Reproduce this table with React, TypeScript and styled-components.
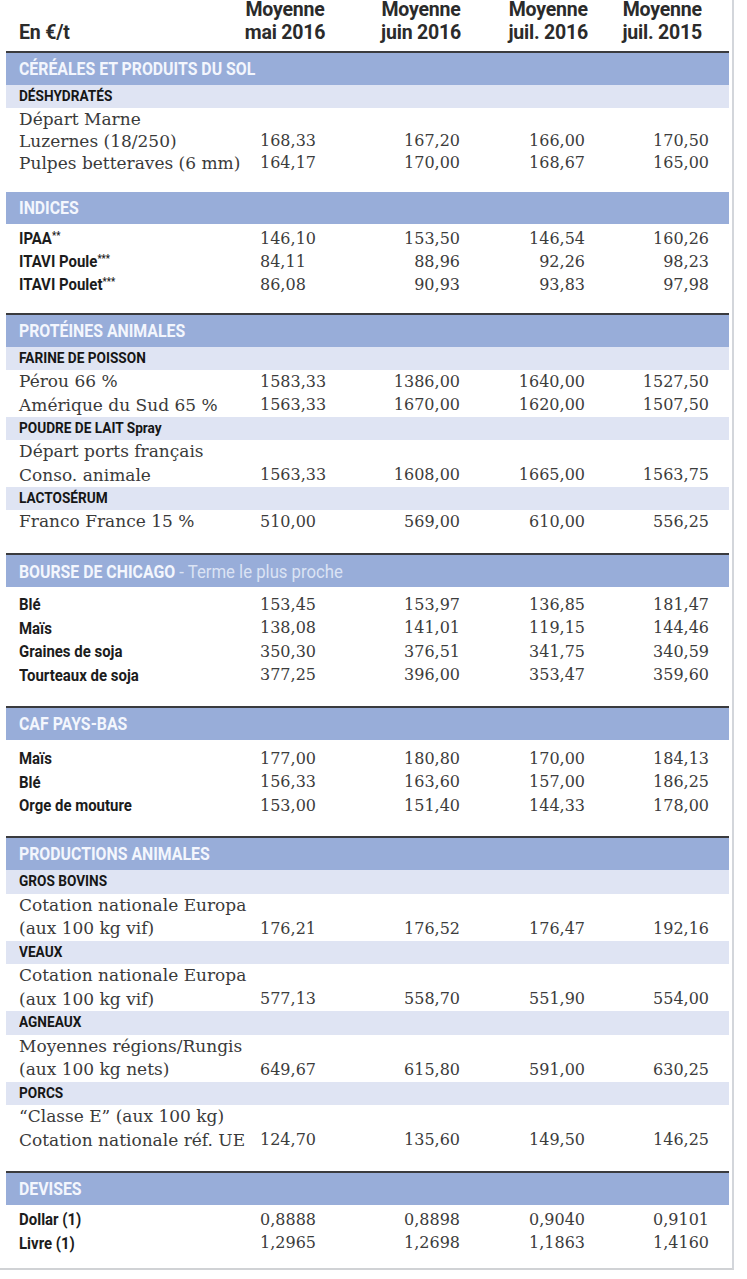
import React from 'react';
import styled, { createGlobalStyle } from 'styled-components';

const GlobalStyle = createGlobalStyle`
  html, body { margin: 0; padding: 0; background: #ffffff; }
  body { font-family: "DejaVu Serif", serif; overflow: hidden; }
`;

const COLS = '234px 90px 140px 125px 134px';

type Item =
  | { kind: 'sub'; text: string; extra?: string }
  | { kind: 'row'; label: string; bold?: boolean; sup?: string; values?: string[] };

type SectionData = {
  title: string;
  suffix?: string;
  rule: boolean;
  row: number;
  sub: number;
  pt: number;
  pb: number;
  items: Item[];
};

const sections: SectionData[] = [
  {
    title: 'CÉRÉALES ET PRODUITS DU SOL',
    rule: true, row: 22, sub: 23, pt: 0, pb: 18,
    items: [
      { kind: 'sub', text: 'DÉSHYDRATÉS' },
      { kind: 'row', label: 'Départ Marne' },
      { kind: 'row', label: 'Luzernes (18/250)', values: ['168,33', '167,20', '166,00', '170,50'] },
      { kind: 'row', label: 'Pulpes betteraves (6 mm)', values: ['164,17', '170,00', '168,67', '165,00'] },
    ],
  },
  {
    title: 'INDICES',
    rule: false, row: 23, sub: 23, pt: 3, pb: 17,
    items: [
      { kind: 'row', label: 'IPAA', sup: '**', bold: true, values: ['146,10', '153,50', '146,54', '160,26'] },
      { kind: 'row', label: 'ITAVI Poule', sup: '***', bold: true, values: ['84,11', '88,96', '92,26', '98,23'] },
      { kind: 'row', label: 'ITAVI Poulet', sup: '***', bold: true, values: ['86,08', '90,93', '93,83', '97,98'] },
    ],
  },
  {
    title: 'PROTÉINES ANIMALES',
    rule: true, row: 23.5, sub: 23, pt: 0, pb: 19.5,
    items: [
      { kind: 'sub', text: 'FARINE DE POISSON' },
      { kind: 'row', label: 'Pérou 66 %', values: ['1583,33', '1386,00', '1640,00', '1527,50'] },
      { kind: 'row', label: 'Amérique du Sud 65 %', values: ['1563,33', '1670,00', '1620,00', '1507,50'] },
      { kind: 'sub', text: 'POUDRE DE LAIT', extra: 'Spray' },
      { kind: 'row', label: 'Départ ports français' },
      { kind: 'row', label: 'Conso. animale', values: ['1563,33', '1608,00', '1665,00', '1563,75'] },
      { kind: 'sub', text: 'LACTOSÉRUM' },
      { kind: 'row', label: 'Franco France 15 %', values: ['510,00', '569,00', '610,00', '556,25'] },
    ],
  },
  {
    title: 'BOURSE DE CHICAGO',
    suffix: ' - Terme le plus proche',
    rule: true, row: 23.5, sub: 23, pt: 6, pb: 19,
    items: [
      { kind: 'row', label: 'Blé', bold: true, values: ['153,45', '153,97', '136,85', '181,47'] },
      { kind: 'row', label: 'Maïs', bold: true, values: ['138,08', '141,01', '119,15', '144,46'] },
      { kind: 'row', label: 'Graines de soja', bold: true, values: ['350,30', '376,51', '341,75', '340,59'] },
      { kind: 'row', label: 'Tourteaux de soja', bold: true, values: ['377,25', '396,00', '353,47', '359,60'] },
    ],
  },
  {
    title: 'CAF PAYS-BAS',
    rule: true, row: 23.5, sub: 23, pt: 7, pb: 18.5,
    items: [
      { kind: 'row', label: 'Maïs', bold: true, values: ['177,00', '180,80', '170,00', '184,13'] },
      { kind: 'row', label: 'Blé', bold: true, values: ['156,33', '163,60', '157,00', '186,25'] },
      { kind: 'row', label: 'Orge de mouture', bold: true, values: ['153,00', '151,40', '144,33', '178,00'] },
    ],
  },
  {
    title: 'PRODUCTIONS ANIMALES',
    rule: true, row: 23.5, sub: 23.5, pt: 0, pb: 19,
    items: [
      { kind: 'sub', text: 'GROS BOVINS' },
      { kind: 'row', label: 'Cotation nationale Europa' },
      { kind: 'row', label: '(aux 100 kg vif)', values: ['176,21', '176,52', '176,47', '192,16'] },
      { kind: 'sub', text: 'VEAUX' },
      { kind: 'row', label: 'Cotation nationale Europa' },
      { kind: 'row', label: '(aux 100 kg vif)', values: ['577,13', '558,70', '551,90', '554,00'] },
      { kind: 'sub', text: 'AGNEAUX' },
      { kind: 'row', label: 'Moyennes régions/Rungis' },
      { kind: 'row', label: '(aux 100 kg nets)', values: ['649,67', '615,80', '591,00', '630,25'] },
      { kind: 'sub', text: 'PORCS' },
      { kind: 'row', label: '“Classe E” (aux 100 kg)' },
      { kind: 'row', label: 'Cotation nationale réf. UE', values: ['124,70', '135,60', '149,50', '146,25'] },
    ],
  },
  {
    title: 'DEVISES',
    rule: true, row: 23.5, sub: 23, pt: 3, pb: 13,
    items: [
      { kind: 'row', label: 'Dollar (1)', bold: true, values: ['0,8888', '0,8898', '0,9040', '0,9101'] },
      { kind: 'row', label: 'Livre (1)', bold: true, values: ['1,2965', '1,2698', '1,1863', '1,4160'] },
    ],
  },
];

const headers: { top: string; bottom: string; align: 'center' | 'flex-end'; pr: number }[] = [
  { top: 'Moyenne', bottom: 'mai 2016', align: 'center', pr: 0 },
  { top: 'Moyenne', bottom: 'juin 2016', align: 'flex-end', pr: 9 },
  { top: 'Moyenne', bottom: 'juil. 2016', align: 'flex-end', pr: 7 },
  { top: 'Moyenne', bottom: 'juil. 2015', align: 'flex-end', pr: 27 },
];

const Frame = styled.div`
  width: 723px;
  padding: 0 3px 0 6px;
  border-right: 2px solid #d3d6db;
  border-bottom: 2px solid #d0d2d5;
`;

const Header = styled.div`
  display: grid;
  grid-template-columns: ${COLS};
  margin-top: -2px;
  padding-bottom: 7px;
  font-family: Roboto, "Liberation Sans", sans-serif;
  font-weight: 700;
  font-size: 19.5px;
  line-height: 23px;
  color: #2b2b2b;
  letter-spacing: -0.2px;
`;

const HeadLabel = styled.div`
  align-self: end;
  padding-left: 13px;
  white-space: nowrap;
`;

const HeadCell = styled.div<{ $align: string; $pr: number }>`
  display: flex;
  justify-content: ${(p) => p.$align};
  padding-right: ${(p) => p.$pr}px;
`;

const HeadText = styled.div`
  display: flex;
  flex-direction: column;
  align-items: center;
  white-space: nowrap;
`;

const Section = styled.section<{ $rule: boolean; $pb: number; $row: number; $sub: number }>`
  border-top: ${(p) => (p.$rule ? '2px solid #3a3b3e' : 'none')};
  padding-bottom: ${(p) => p.$pb}px;
  --row-h: ${(p) => p.$row}px;
  --sub-h: ${(p) => p.$sub}px;
`;

const Band = styled.div`
  height: 32px;
  display: flex;
  align-items: center;
  padding-left: 13px;
  background: #98add9;
`;

const Condensed = styled.span<{ $size: number; $color: string }>`
  display: inline-block;
  transform: scaleX(0.88);
  transform-origin: left center;
  font-family: Roboto, "Liberation Sans", sans-serif;
  font-weight: 700;
  font-size: ${(p) => p.$size}px;
  color: ${(p) => p.$color};
  white-space: nowrap;
  line-height: 1;
`;

const Suffix = styled.span`
  font-weight: 400;
  font-size: 19px;
  color: #dbe3f4;
`;

const Body = styled.div<{ $pt: number }>`
  padding-top: ${(p) => p.$pt}px;
`;

const Sub = styled.div`
  height: var(--sub-h);
  display: flex;
  align-items: center;
  padding-left: 13px;
  background: #dfe4f3;
`;

const Row = styled.div`
  display: grid;
  grid-template-columns: ${COLS};
  height: var(--row-h);
  align-items: center;
`;

const Label = styled.div`
  padding-left: 13px;
  font-family: "DejaVu Serif", serif;
  font-size: 17px;
  color: #3a3a3a;
  white-space: nowrap;
  line-height: 1;
`;

const Sup = styled.span`
  font-size: 0.62em;
  vertical-align: 0.45em;
`;

const alignFor = (col: number) => {
  if (col === 0) return 'text-align: left; padding-left: 20px;';
  if (col === 3) return 'text-align: right; padding-right: 20px;';
  return 'text-align: right; padding-right: 10px;';
};

const Value = styled.div<{ $col: number }>`
  ${(p) => alignFor(p.$col)}
  font-family: "DejaVu Serif", serif;
  font-size: 16px;
  color: #3c3c3c;
  white-space: nowrap;
  line-height: 1;
`;

export default function App() {
  return (
    <>
      <GlobalStyle />
      <Frame>
        <Header>
          <HeadLabel>En €/t</HeadLabel>
          {headers.map((h, i) => (
            <HeadCell key={i} $align={h.align} $pr={h.pr}>
              <HeadText>
                <span>{h.top}</span>
                <span>{h.bottom}</span>
              </HeadText>
            </HeadCell>
          ))}
        </Header>
        {sections.map((s, si) => (
          <Section key={si} $rule={s.rule} $pb={s.pb} $row={s.row} $sub={s.sub}>
            <Band>
              <Condensed $size={18} $color="#f3f6fd">
                {s.title}
                {s.suffix && <Suffix>{s.suffix}</Suffix>}
              </Condensed>
            </Band>
            <Body $pt={s.pt}>
              {s.items.map((it, ii) =>
                it.kind === 'sub' ? (
                  <Sub key={ii}>
                    <Condensed $size={15.5} $color="#161616">
                      {it.text}
                      {it.extra && <> {it.extra}</>}
                    </Condensed>
                  </Sub>
                ) : (
                  <Row key={ii}>
                    {it.bold ? (
                      <Label>
                        <Condensed $size={17} $color="#1c1c1c">
                          {it.label}
                          {it.sup && <Sup>{it.sup}</Sup>}
                        </Condensed>
                      </Label>
                    ) : (
                      <Label>{it.label}</Label>
                    )}
                    {(it.values ?? []).map((v, vi) => (
                      <Value key={vi} $col={vi}>
                        {v}
                      </Value>
                    ))}
                  </Row>
                )
              )}
            </Body>
          </Section>
        ))}
      </Frame>
    </>
  );
}
